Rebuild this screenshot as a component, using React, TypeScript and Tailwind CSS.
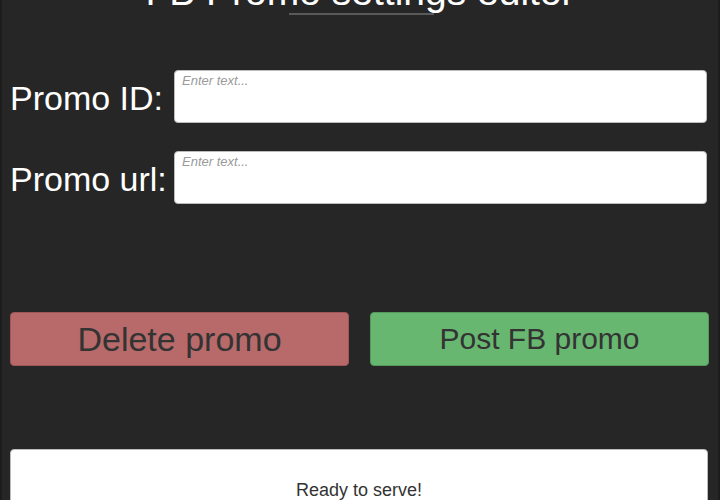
import React from "react";

export default function App() {
  return (
    <div className="w-[720px] h-[500px] overflow-hidden bg-[#262626] border-x-2 border-[#1c1c1c] relative" style={{ fontFamily: '"Liberation Sans", Arial, sans-serif' }}>
      <div className="h-[14px] relative">
        <div className="absolute left-0 right-0 top-[-31px] text-center text-white text-[39px] leading-[46px] whitespace-nowrap">
          FB Promo settings editor
        </div>
        <div className="absolute left-[287px] top-[13px] w-[145px] h-[2px] bg-[#5a5a5a]" />
      </div>
      <div className="flex flex-col gap-[28px] mt-[56px] pl-[8px] pr-[11px]">
        <div className="flex items-center gap-[11px]">
          <div className="w-[153px] text-white text-[34px] leading-[36px] mt-[3px] whitespace-nowrap">Promo ID:</div>
          <div className="flex-1 h-[53px] bg-white rounded-[4px] border border-[#bbbbbb] px-[7px] pt-0 leading-[18px]">
            <span className="italic text-[13px] text-[#9a9a9a]">Enter text...</span>
          </div>
        </div>
        <div className="flex items-center gap-[11px]">
          <div className="w-[153px] text-white text-[34px] leading-[36px] mt-[3px] whitespace-nowrap">Promo url:</div>
          <div className="flex-1 h-[53px] bg-white rounded-[4px] border border-[#bbbbbb] px-[7px] pt-0 leading-[18px]">
            <span className="italic text-[13px] text-[#9a9a9a]">Enter text...</span>
          </div>
        </div>
      </div>
      <div className="flex gap-[21px] mt-[108px] pl-[8px] pr-[9px]">
        <button className="flex-1 h-[54px] rounded-[4px] bg-[#b86a6a] border border-[#9e5656] text-[#333333] text-[34px] leading-[40px]">Delete promo</button>
        <button className="flex-1 h-[54px] rounded-[4px] bg-[#68b770] border border-[#559a5c] text-[#333333] text-[30px] leading-[40px]">Post FB promo</button>
      </div>
      <div className="mt-[83px] ml-[8px] mr-[10px] h-[80px] bg-white rounded-[4px] border border-[#bbbbbb] flex justify-center pt-[27px]">
        <span className="text-[18px] text-[#333333]">Ready to serve!</span>
      </div>
    </div>
  );
}
